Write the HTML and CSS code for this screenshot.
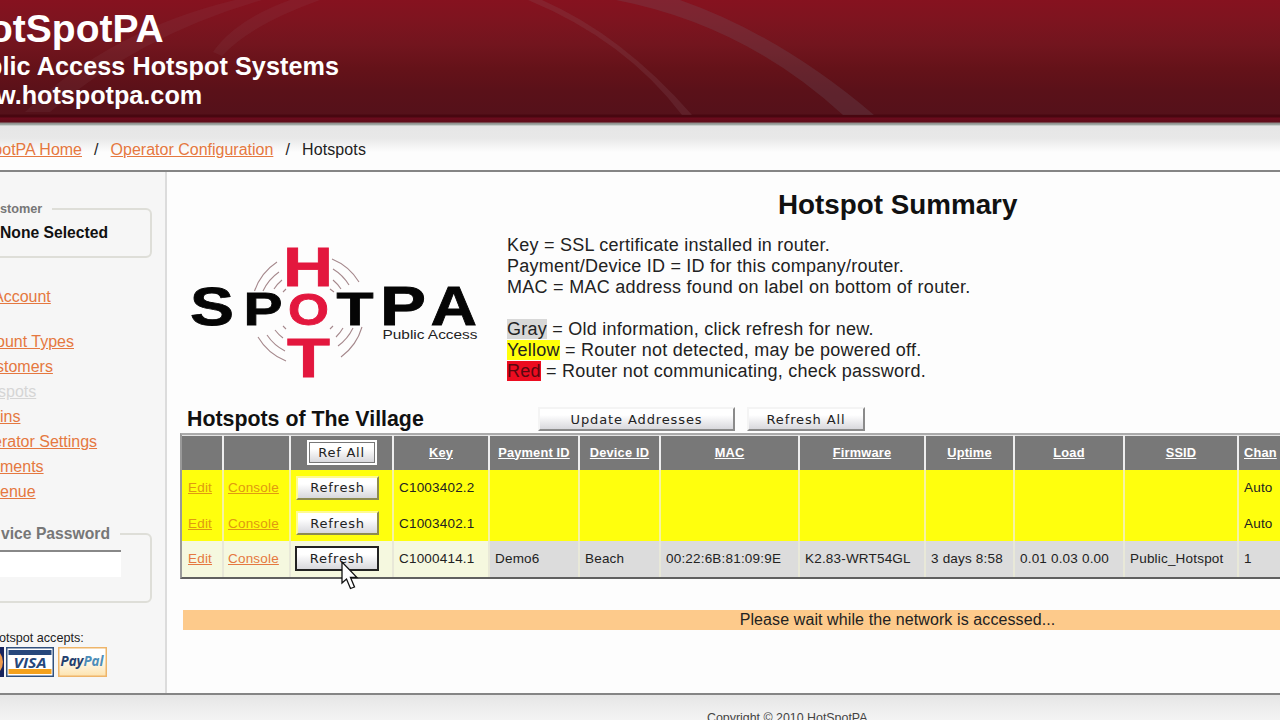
FILE: index.html
```html
<!DOCTYPE html>
<html lang="en">
<head>
<meta charset="utf-8">
<title>Hotspot Summary</title>
<link rel="stylesheet" href="styles.css">
</head>
<body>
<header class="banner">
  <svg class="swoosh" width="1280" height="115" viewBox="0 0 1280 115">
    <path d="M528 0H542Q622 35 692 115H682Q625 40 528 0Z" fill="#8a6068" opacity=".2"/>
    <path d="M616 0H680Q780 35 874 115H843Q745 25 616 0Z" fill="#70606c" opacity=".24"/>
    <path d="M235 0H262Q140 35 50 112H25Q110 30 235 0ZM290 0H320Q250 25 222 56L213 52Q235 20 290 0Z" fill="#906068" opacity=".12"/>
  </svg>
  <div class="brand">otSpotPA</div>
  <div class="tagline">blic Access Hotspot Systems</div>
  <div class="site">w.hotspotpa.com</div>
</header>
<nav class="crumbs">
  <a class="crumb-home">potPA Home</a><i>/</i><a>Operator Configuration</a><i>/</i><span>Hotspots</span>
</nav>
<div class="columns">
  <aside class="side">
    <fieldset class="box customer"><legend>stomer</legend><b>None Selected</b></fieldset>
    <ul class="menu">
      <li class="account"><a>Account</a></li>
      <li><a>ount Types</a></li>
      <li><a>stomers</a></li>
      <li class="in3"><a class="current">spots</a></li>
      <li class="in5"><a>ins</a></li>
      <li class="out"><a>erator Settings</a></li>
      <li class="in5"><a>ments</a></li>
      <li class="in5"><a>enue</a></li>
    </ul>
    <fieldset class="box password"><legend>vice Password</legend><div class="field"></div></fieldset>
    <p class="accepts">otspot accepts:</p>
    <div class="cards">
      <svg width="4" height="30" viewBox="0 0 4 30"><path d="M0 0H4V30H0Z" fill="#17245e"/><path d="M0 6Q3 10 3 15Q3 20 0 24Z" fill="#ef9b4d"/></svg>
      <svg width="48" height="30" viewBox="0 0 48 30"><rect x=".75" y=".75" width="46.5" height="28.5" fill="#fff" stroke="#31517e" stroke-width="1.5"/><path d="M2.500 3H45.500V8H2.500Z" fill="#26477c"/><path d="M2.500 22H45.500V27H2.500Z" fill="#f4a11c"/><text class="visa" x="7.500" y="20.500" textLength="33" lengthAdjust="spacingAndGlyphs">VISA</text></svg>
      <svg width="49" height="30" viewBox="0 0 49 30"><defs><linearGradient id="pp" x2="0" y2="1"><stop offset=".3" stop-color="#fff"/><stop offset="1" stop-color="#fde3ae"/></linearGradient></defs><rect x=".75" y=".75" width="47.500" height="28.500" fill="url(#pp)" stroke="#eeb56a" stroke-width="1.5"/><text class="paypal" x="2.500" y="19" textLength="43" lengthAdjust="spacingAndGlyphs"><tspan fill="#24406f">Pay</tspan><tspan fill="#4c8dba">Pal</tspan></text></svg>
    </div>
  </aside>
  <main class="main">
    <h1>Hotspot Summary</h1>
    <section class="intro">
      <svg class="logo" width="300" height="140" viewBox="186 240 300 140">
        <g fill="none" stroke="#a5888c" stroke-width="1.1">
          <path d="M254.500 291A57 57 0 0 1 277 262M263 291A48 48 0 0 1 279 272M274 289A40 40 0 0 1 282 280M283 292L286 289"/>
          <path d="M332 259A57 57 0 0 1 359 282M333 269A48 48 0 0 1 349 285M333 280A40 40 0 0 1 341 289M330 289L334 292"/>
          <path d="M258 337A57 57 0 0 0 286 361M267 335A48 48 0 0 0 285 351M275 330A40 40 0 0 0 283 338M283 326L286 329"/>
          <path d="M362 327A57 57 0 0 1 341 357M353 328A48 48 0 0 1 338 346M343 328A40 40 0 0 1 336 337M330 329L333 326"/>
        </g>
        <g class="wide">
          <text x="190" y="324.500" font-size="54" textLength="44" lengthAdjust="spacingAndGlyphs">S</text>
          <text x="243.500" y="325" font-size="46" textLength="39" lengthAdjust="spacingAndGlyphs">P</text>
          <text x="336.500" y="325" font-size="46" textLength="37" lengthAdjust="spacingAndGlyphs">T</text>
          <text x="380" y="325" font-size="56" textLength="46" lengthAdjust="spacingAndGlyphs">P</text>
          <text x="430.500" y="325" font-size="56" textLength="46.500" lengthAdjust="spacingAndGlyphs">A</text>
        </g>
        <g class="wide hot">
          <text x="283" y="285.500" font-size="56" textLength="50" lengthAdjust="spacingAndGlyphs">H</text>
          <text x="288" y="324.500" font-size="44" textLength="41" lengthAdjust="spacingAndGlyphs">O</text>
          <text x="287" y="376.500" font-size="56" textLength="43" lengthAdjust="spacingAndGlyphs">T</text>
        </g>
        <text class="sub" x="382.500" y="339" textLength="95" lengthAdjust="spacingAndGlyphs">Public Access</text>
      </svg>
      <div class="legend">
        <div>Key = SSL certificate installed in router.</div>
        <div>Payment/Device ID = ID for this company/router.</div>
        <div class="mac">MAC = MAC address found on label on bottom of router.</div>
        <div class="gap"><mark class="gray">Gray</mark> = Old information, click refresh for new.</div>
        <div><mark class="yellow">Yellow</mark> = Router not detected, may be powered off.</div>
        <div><mark class="red">Red</mark> = Router not communicating, check password.</div>
      </div>
    </section>
    <div class="bar">
      <h2>Hotspots of The Village</h2>
      <button class="btn update">Update Addresses</button>
      <button class="btn all">Refresh All</button>
    </div>
    <table class="grid">
      <colgroup><col class="c1"><col class="c2"><col class="c3"><col class="c4"><col class="c5"><col class="c6"><col class="c7"><col class="c8"><col class="c9"><col class="c10"><col class="c11"><col class="c12"></colgroup>
      <tr class="head"><th></th><th></th><th><button class="btn ref">Ref All</button></th><th><u>Key</u></th><th><u>Payment ID</u></th><th><u>Device ID</u></th><th><u>MAC</u></th><th><u>Firmware</u></th><th><u>Uptime</u></th><th><u>Load</u></th><th><u>SSID</u></th><th class="chan"><u>Chan</u></th></tr>
      <tr class="missing"><td><a>Edit</a></td><td><a>Console</a></td><td><button class="btn">Refresh</button></td><td>C1003402.2</td><td></td><td></td><td></td><td></td><td></td><td></td><td></td><td>Auto</td></tr>
      <tr class="missing"><td><a>Edit</a></td><td><a>Console</a></td><td><button class="btn">Refresh</button></td><td>C1003402.1</td><td></td><td></td><td></td><td></td><td></td><td></td><td></td><td>Auto</td></tr>
      <tr class="stale"><td><a>Edit</a></td><td><a>Console</a></td><td class="pressed"><button class="btn active">Refresh</button><svg class="cursor" width="18" height="29" viewBox="0 0 18 29"><path d="M1 1V22L5.500 18L9.500 27.500L13.500 26L9.500 16.500H16Z" fill="#fff" stroke="#111" stroke-width="1.3"/></svg></td><td>C1000414.1</td><td>Demo6</td><td>Beach</td><td>00:22:6B:81:09:9E</td><td>K2.83-WRT54GL</td><td>3 days 8:58</td><td>0.01 0.03 0.00</td><td>Public_Hotspot</td><td>1</td></tr>
    </table>
    <div class="notice">Please wait while the network is accessed...</div>
  </main>
</div>
<footer class="foot">Copyright © 2010 HotSpotPA</footer>
</body>
</html>
```

FILE: styles.css
```css
* { box-sizing: border-box; }
body {
  margin: 0; width: 1280px; height: 720px; overflow: hidden;
  background: #fdfdfd; color: #222;
  font-family: "Liberation Sans", Arial, sans-serif; font-size: 16px;
  white-space: nowrap;
}
a { color: #e57840; text-decoration: underline; }
.banner {
  position: relative; height: 126px; overflow: hidden;
  color: #fff; font-weight: bold;
  background: linear-gradient(#86121f 0, #7d141f 22px, #72151e 45px, #651219 68px, #5a1119 92px, #55111a 114px, #480710 115px, #480710 117px, #6b0b1d 118px, #610d1a 122px, #8b8987 123px, #a6b0ab 125px, #eee 126px);
}
.swoosh { position: absolute; left: 0; top: 0; }
.brand, .tagline, .site { position: relative; }
.brand { margin: 6px 0 0 -11px; font-size: 39px; line-height: 46px; }
.tagline { margin-left: -13px; font-size: 25.2px; line-height: 29px; letter-spacing: .06px; }
.site { margin-left: -4px; font-size: 25.2px; line-height: 29px; letter-spacing: 0; }
.crumbs {
  display: flex; height: 46px; line-height: 47px; overflow: hidden;
  border-bottom: 2px solid #858585;
  background: linear-gradient(#e6e6e6, #e8e8e8 12px, #f1f1f1 18px, #fdfdfd 26px);
}
.crumbs i { width: 28.6px; text-align: center; font-style: normal; }
.crumbs span { letter-spacing: .12px; }
.crumb-home { width: 82px; display: flex; justify-content: flex-end; }
.columns { display: flex; height: 521px; }
.side { width: 167px; border-right: 2px solid #dcdcdc; background: #f6f6f6; overflow: hidden; }
.box { margin: 0; width: 160px; margin-left: -8px; border: 2px solid #deded8; border-radius: 6px; padding: 0; }
.box legend { color: #777; font-weight: bold; }
.customer { margin-top: 29px; height: 57px; }
.customer legend { padding: 0 10px 0 6px; font-size: 12.7px; line-height: 16px; }
.customer b { display: block; margin-left: 6px; color: #111; font-size: 15.7px; line-height: 31px; }
.menu { list-style: none; margin: 26px 0 21px; padding: 0; font-size: 16px; line-height: 25px; }
.menu li { margin-left: -4px; height: 25px; }
.menu li.account { margin: 0 0 20px -7px; }
.menu li.in3 { margin-left: -2px; }
.menu li.in5 { margin-left: 0; }
.menu li.out { margin-left: -7px; }
.menu .current { color: #d5d5d5; }
.password { height: 79px; margin-top: -1px; }
.password legend { padding: 0 10px 0 7px; font-size: 15.7px; line-height: 20px; }
.field { width: 127px; height: 27px; margin-top: 6px; background: #fff; border-top: 2px solid #888; }
.accepts { margin: 26px 0 0 -1px; font-size: 12.6px; line-height: 18px; }
.cards { display: flex; }
.cards svg:nth-child(2) { margin: 0 4px 0 2px; }
.visa { font: italic bold 15px "Open Sans", sans-serif; fill: #26477c; }
.paypal { font: italic bold 14px "Open Sans", sans-serif; }
.main { width: 1113px; padding-left: 13px; overflow: hidden; }
h1 { margin: 16px 0 0 598px; color: #111; font-size: 27.8px; line-height: 34px; }
.intro { display: flex; padding: 13px 0 0 6px; height: 181px; }
.logo { margin-top: 5px; flex: none; }
.wide { font-weight: bold; fill: #050505; stroke: #050505; stroke-width: .8; }
.hot { fill: #e3173e; stroke: #e3173e; }
.sub { font-size: 12.5px; fill: #222; }
.legend { margin-left: 21px; font-size: 18px; line-height: 21px; letter-spacing: .24px; }
.mac { letter-spacing: .28px; }
.gap { margin-top: 21px; }
mark { color: #222; }
.gray { background: #d8d8d8; }
.yellow { background: #ffff0a; }
.red { background: #ec0c20; color: #5a0810; }
.bar { display: flex; height: 30px; padding: 4px 0 0 7px; }
h2 { margin: 0; width: 351px; color: #111; font-size: 21.35px; line-height: 25px; }
.btn {
  height: 24px; padding: 0; color: #222;
  font-family: "DejaVu Sans", Verdana, sans-serif; font-size: 13px; letter-spacing: .75px;
  border: 2px solid; border-color: #f4f4f4 #8b8b8b #8b8b8b #f4f4f4;
  background: linear-gradient(#fff 30%, #eeeef0 60%, #d8d8dc);
}
.update { width: 197px; letter-spacing: .88px; }
.all { width: 118px; margin-left: 12px; letter-spacing: .88px; }
.grid {
  table-layout: fixed; width: 1121px; height: 145px; border-collapse: separate; border-spacing: 0;
  border: 2px solid; border-color: #aaa #aaa #606060 #999;
  font-size: 13.5px; letter-spacing: .19px;
}
.c1 { width: 40px; } .c2 { width: 67px; } .c3 { width: 103px; } .c4 { width: 96px; }
.c5 { width: 90px; } .c6 { width: 81px; } .c7 { width: 139px; } .c8 { width: 126px; }
.c9 { width: 89px; } .c10 { width: 110px; } .c11 { width: 114px; } .c12 { width: 62px; }
th, td { padding: 0 0 0 5px; border-left: 2px solid #e8e8d8; text-align: left; }
th:first-child, td:first-child { border-left-width: 0; }
td:first-child { padding-left: 6px; }
td:nth-child(2) { padding-left: 4px; }
.head { height: 35px; color: #fff; font-size: 12.8px; }
.head th { background: #787878; border-color: #eee; border-top: 1px solid #e4e4e4; padding: 0 0 2px; text-align: center; }
.head th.chan { text-align: left; padding-left: 5px; }
tr { height: 35.5px; }
.missing td { background: #ffff0d; border-color: #f7f3a0; }
.missing a { color: #e09a10; }
.stale td { background: #dcdcdc; }
.stale td:nth-child(-n+4) { background: #f5f8df; }
td .btn { width: 83px; display: block; }
.missing .btn { border-color: #fffb90 #8d8b50 #8d8b50 #fffb90; }
.ref { width: 66px; height: 21px; border: 1px solid #777; outline: 2px solid #fff; line-height: 19px; }
.pressed { position: relative; }
.pressed .active { width: 84px; height: 25px; margin-left: -1px; border: 2px solid #222; }
.cursor { position: absolute; left: 50px; top: 20px; }
.notice { margin: 31px 0 0 3px; width: 1429px; height: 20px; line-height: 20px; background: #fdca8b; text-align: center; letter-spacing: .1px; }
.foot { height: 40px; border-top: 2px solid #858585; background: linear-gradient(#e6e6e6, #f4f4f4 26px); padding: 15px 0 0 707px; font-size: 12.4px; line-height: 16px; color: #444; }
```
